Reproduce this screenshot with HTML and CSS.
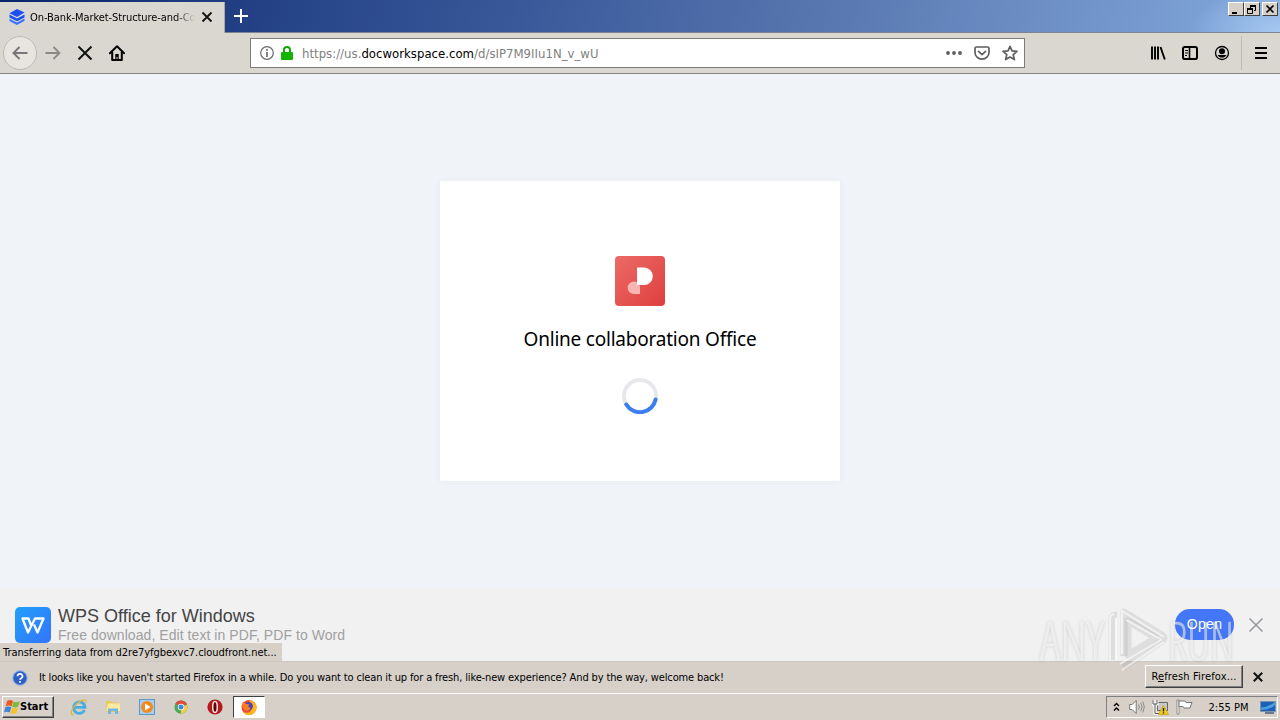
FILE: index.html
```
<!DOCTYPE html>
<html lang="en">
<head>
    <meta charset="UTF-8">
    <meta name="viewport" content="width=device-width, initial-scale=1.0">
    <title>On-Bank-Market-Structure-and-Co</title>
    <link rel="stylesheet" href="styles.css">
</head>
<body>
    <div class="titlebar">
        <div class="tab">
            <svg class="favicon" width="16" height="16" viewBox="0 0 16 16">
                <path fill="#1a50f0" d="M8 0l7.5 3.6L8 8 .5 4.2z"/>
                <path fill="#1a50f0" d="M.5 5.6L8 9.4l7.5-4v3L8 12.2.5 8.4z"/>
                <path fill="#3a72ff" d="M.5 9.8L8 13.4l7.5-3.8v2.2L8 16 .5 12z"/>
            </svg>
            <span class="tab-title">On-Bank-Market-Structure-and-Co</span>
            <svg class="tab-close" width="12" height="12" viewBox="0 0 12 12"><path d="M1.5 1.5l9 9M10.500 1.500l-9 9" stroke="#111" stroke-width="1.800"/></svg>
        </div>
        <svg class="new-tab" width="14" height="14" viewBox="0 0 14 14"><path d="M7 0v14M0 7h14" stroke="#fff" stroke-width="2"/></svg>
        <div class="window-buttons">
            <div class="win-btn"><svg width="12" height="11"><path d="M2 9h5" stroke="#000" stroke-width="2"/></svg></div>
            <div class="win-btn"><svg width="12" height="11"><path d="M4.500 4V1.500h5v5H8M1.500 5.500h5v4h-5z" fill="none" stroke="#000"/><path d="M4 2h6M1 5h6" stroke="#000" stroke-width="2"/></svg></div>
            <div class="win-btn close"><svg width="12" height="11"><path d="M2.500 1.500l7 7M9.500 1.500l-7 7" stroke="#000" stroke-width="1.700"/></svg></div>
        </div>
    </div>

    <div class="toolbar">
        <div class="nav">
            <div class="back"><svg width="16" height="16" viewBox="0 0 16 16"><path d="M15.500 8H1.500M7.500 2l-6 6 6 6" fill="none" stroke="#77757a" stroke-width="1.900"/></svg></div>
            <svg class="forward" width="16" height="16" viewBox="0 0 16 16"><path d="M.5 8h14M8.500 2l6 6-6 6" fill="none" stroke="#8b8986" stroke-width="1.800"/></svg>
            <svg class="stop" width="16" height="16" viewBox="0 0 16 16"><path d="M1.500 1.500l13 13M14.500 1.500l-13 13" stroke="#111" stroke-width="2"/></svg>
            <svg class="home" width="16" height="16" viewBox="0 0 16 16"><path d="M.9 8.300L8 1.300l7.100 7" fill="none" stroke="#000" stroke-width="1.900" stroke-linejoin="round" stroke-linecap="round"/><path d="M3.200 7v8h9.600V7" fill="none" stroke="#000" stroke-width="2" stroke-linejoin="round"/><path d="M6.300 9h3.400v3H6.300zM6.300 12h1.200v3H6.300zM8.500 12h1.200v3H8.500z"/></svg>
        </div>
        <div class="urlbar">
            <svg width="14" height="14" viewBox="0 0 14 14"><circle cx="7" cy="7" r="6.300" fill="none" stroke="#6a6a6a" stroke-width="1.200"/><path d="M7 3v1.800M7 6v5" stroke="#666" stroke-width="1.600"/></svg>
            <svg class="lock" width="12" height="14" viewBox="0 0 12 14"><path d="M3 7V4a3 3 0 0 1 6 0v3" fill="none" stroke="#12a80c" stroke-width="2"/><rect y="6" width="12" height="8" rx="1.200" fill="#12b400"/></svg>
            <span class="url">https://us.<b>docworkspace.com</b>/d/sIP7M9IIu1N_v_wU</span>
            <svg class="dots" width="16" height="16" viewBox="0 0 16 16" fill="#5e5e5e"><circle cx="2" cy="8" r="1.900"/><circle cx="8" cy="8" r="1.900"/><circle cx="14" cy="8" r="1.900"/></svg>
            <svg class="pocket" width="16" height="16" viewBox="0 0 16 16" fill="none" stroke="#5e5e5e" stroke-width="1.700"><path d="M2.500 2h11a1.500 1.500 0 0 1 1.500 1.500V7.500a7 6.700 0 0 1-14 0V3.500A1.500 1.500 0 0 1 2.500 2z"/><path d="M4.500 6.300L8 9.600l3.500-3.300" stroke-linecap="round" stroke-linejoin="round"/></svg>
            <svg width="16" height="16" viewBox="0 0 16 16"><path d="M8 1.300l2 4.600 5 .4-3.800 3.300 1.200 5L8 12l-4.400 2.600 1.200-5L1 6.300l5-.4z" fill="none" stroke="#5e5e5e" stroke-width="1.700" stroke-linejoin="round"/></svg>
        </div>
        <div class="tools">
            <svg width="16" height="16" viewBox="0 0 16 16"><path d="M2 1.500v13M5 1.500v13M8 1.500v13M10.500 2l4.300 12.500" fill="none" stroke="#000" stroke-width="1.900"/></svg>
            <svg width="16" height="16" viewBox="0 0 16 16"><rect x="1" y="2" width="14" height="12" rx="1.800" fill="none" stroke="#000" stroke-width="2"/><path d="M7.500 2v12" stroke="#000" stroke-width="1.600"/><path d="M3 5.500h3M3 8h3M3 10.500h2" stroke="#000"/></svg>
            <svg width="16" height="16" viewBox="0 0 16 16"><circle cx="8" cy="8" r="6.500" fill="none" stroke="#000" stroke-width="1.300"/><circle cx="8" cy="6.300" r="3"/><path d="M3.500 10h9a5.200 5.200 0 0 1-9 0z"/></svg>
            <div class="menu"><svg width="12" height="12" viewBox="0 0 12 12"><path d="M0 1h12M0 6h12M0 11h12" stroke="#000" stroke-width="2"/></svg></div>
        </div>
    </div>

    <div class="page">
        <div class="card">
            <svg width="50" height="50" viewBox="0 0 50 50">
                <defs><linearGradient id="red" x1="0" y1="0" x2="1" y2="1"><stop offset="0" stop-color="#ec6a66"/><stop offset="1" stop-color="#de403e"/></linearGradient></defs>
                <rect width="50" height="50" rx="4" fill="url(#red)"/>
                <path d="M25 38h-6.200a6.200 6.200 0 1 1 6.200-6.200z" fill="#f7b5b3"/>
                <path d="M22 11.500h7a8.800 8.800 0 0 1 0 17.600h-7z" fill="#fff"/>
            </svg>
            <h1>Online collaboration Office</h1>
            <svg class="spinner" width="36" height="36" viewBox="0 0 36 36" fill="none" stroke-width="4">
                <circle cx="18" cy="18" r="16" stroke="#e7e8ec"/>
                <path d="M4.300 26.500A16 16 0 0 0 33.600 21.500" stroke="#3d7eed" stroke-linecap="round"/>
            </svg>
        </div>
        <div class="promo">
            <svg class="wps" width="36" height="36" viewBox="0 0 36 36">
                <defs><linearGradient id="blue" x1="0" y1="0" x2="1" y2="1"><stop offset="0" stop-color="#22a0fa"/><stop offset="1" stop-color="#3274fa"/></linearGradient></defs>
                <rect width="36" height="36" rx="5" fill="url(#blue)"/>
                <path d="M16.500 19.500l-3-8H7.500l5.500 14 7-14h8.500l-6 14-3.500-8" fill="none" stroke="#fff" stroke-width="2.300" stroke-linejoin="round"/>
            </svg>
            <div class="promo-text">
                <p class="promo-title">WPS Office for Windows</p>
                <p class="promo-sub">Free download, Edit text in PDF, PDF to Word</p>
            </div>
            <div class="open"><span>Open</span></div>
            <svg width="14" height="14" viewBox="0 0 14 14"><path d="M.5 .5l13 13M13.500 .5l-13 13" stroke="#96989c" stroke-width="1.500"/></svg>
        </div>
        <div class="status">Transferring data from d2re7yfgbexvc7.cloudfront.net...</div>
    </div>

    <div class="notice">
        <svg width="16" height="16" viewBox="0 0 16 16"><circle cx="8" cy="8" r="7.300" fill="#2d5fc4" stroke="#9db7e4" stroke-width="1.200"/><path d="M5.500 6.200a2.500 2.300 0 1 1 3.700 2c-.9.500-1.200.8-1.200 1.600M8 11v1.800" fill="none" stroke="#fff" stroke-width="1.700"/></svg>
        <span class="notice-text">It looks like you haven't started Firefox in a while. Do you want to clean it up for a fresh, like-new experience? And by the way, welcome back!</span>
        <div class="refresh"><span>R<u>e</u>fresh Firefox...</span></div>
        <svg class="notice-close" width="10" height="10" viewBox="0 0 10 10"><path d="M.8 .8l8.400 8.400M9.200 .8L.8 9.200" stroke="#111" stroke-width="2"/></svg>
    </div>

    <div class="taskbar">
        <div class="start">
            <svg width="16" height="16" viewBox="0 0 16 16">
                <path d="M3 2q3-2 6 0L7.600 7.400q-3-1.600-6 0z" fill="#ea5a24"/>
                <path d="M9.500 2.500q2.500 1.400 6.300-.3L14.200 7.600q-3 1.600-6 .2z" fill="#7dba3c"/>
                <path d="M1.300 8.300q3-1.600 6 0L5.800 13.500q-3-1.600-5.800 0z" fill="#3e86d8"/>
                <path d="M8 8.800q3 1.400 6 0L12.500 14q-3 1.600-6 .2z" fill="#f6c226"/>
            </svg>
            <span>Start</span>
        </div>
        <div class="launch">
            <svg width="18" height="18" viewBox="0 0 18 18" fill="none"><path d="M14.500 12A5.700 5.700 0 1 1 15 9.300H5" stroke="#48aee2" stroke-width="2.800"/><path d="M4 16.500C-1 18 1.500 10 7 5.500s10.500-5 9-.5" stroke="#e2b63c" stroke-width="1.300"/></svg>
            <svg width="18" height="18" viewBox="0 0 18 18"><path d="M2 3h5l1 1.500h7V14H2z" fill="#e9c85e"/><path d="M4 5.500h12V13H2z" fill="#faeaa2"/><path d="M4 16v-5.500h10V16h-3v-3H7v3z" fill="#70b7e2"/></svg>
            <svg width="18" height="18" viewBox="0 0 18 18"><rect x="1.500" y="1.500" width="15" height="15" fill="#a9cff0" stroke="#5899d2"/><circle cx="9" cy="9" r="6" fill="#f28a1c"/><path d="M7 5.500l5.500 3.500L7 12.500z" fill="#fff"/></svg>
            <svg width="18" height="18" viewBox="0 0 18 18"><circle cx="9" cy="9" r="6.600" fill="#4ba956"/><path d="M9 9L3.300 5.700A6.600 6.600 0 0 1 15.200 6.800H9z" fill="#df4b3c"/><path d="M9 9l6.200-2.200A6.600 6.600 0 0 1 9 15.600z" fill="#f7cf44"/><circle cx="9" cy="9" r="3.200" fill="#fff"/><circle cx="9" cy="9" r="2.500" fill="#4285e8"/></svg>
            <svg width="18" height="18" viewBox="0 0 18 18"><circle cx="9" cy="9" r="7.600" fill="#b5191c"/><ellipse cx="9" cy="9" rx="2.300" ry="5.500" fill="#600" stroke="#f7e5e5" stroke-width="1.500"/></svg>
        </div>
        <div class="task">
            <svg width="18" height="18" viewBox="0 0 18 18"><circle cx="9" cy="9.500" r="7.500" fill="#f34935"/><path d="M9 1c1.500 2 6 2.500 7.300 6.500C17.500 13 14 17 9 17c-3 0-5-1.500-6-3 6 2 9-1 8-4z" fill="#ffb71c"/><circle cx="8.700" cy="8.200" r="4.200" fill="#4b45bb"/><path d="M1.500 8L3 3.500l2.500 2.300 4 .7-1.500 2 2.500 1.500c-1 3-4 3.500-6 1.500z" fill="#fa7d22"/></svg>
        </div>
        <div class="tray">
            <svg class="chevrons" width="7" height="10" viewBox="0 0 7 10"><path d="M1 4l2.500-2.500L6 4M1 8.500L3.500 6 6 8.500" fill="none" stroke="#000" stroke-width="1.400"/></svg>
            <svg class="sound" width="16" height="16" viewBox="0 0 16 16"><path d="M.7 5.500h2.500l4-4v13l-4-4H.7z" fill="#fff" stroke="#777"/><path d="M9.500 5.500q1.700 2.500 0 5M11.700 3.800q2.800 4.200 0 8.400M13.800 2.500q3 5.500 0 11" fill="none" stroke="#8c8c8c"/></svg>
            <svg class="network" width="17" height="16" viewBox="0 0 17 16"><path d="M5.500 3.500h10v8h-10z" fill="#c8c8c8" stroke="#666"/><path d="M1 1v4h4V1M3 5v10h5" fill="none" stroke="#fff" stroke-width="3"/><path d="M1 1v4h4V1M3 5v9.500h5" fill="none" stroke="#555"/><path d="M11.500 6.500l5 9h-10z" fill="#f7cf1d" stroke="#cc9c00" stroke-width=".7"/><path d="M11.500 9v3.500M11.500 13.300v1.200" stroke="#222" stroke-width="1.400"/></svg>
            <svg class="flag" width="17" height="16" viewBox="0 0 17 16"><path d="M1 1h2v14H1z" fill="#fff" stroke="#777" stroke-width=".8"/><path d="M3 2h6l1 1.500h6l-2 5.500H8L7 7.500H3z" fill="#fff" stroke="#777"/></svg>
            <span class="clock">2:55 PM</span>
            <svg width="16" height="16" viewBox="0 0 16 16"><path d="M.5 2.500h15v10H.5z" fill="#1b62b6" stroke="#7b92b0"/><path d="M1 8.500q7 0 14-5.500v3q-5 5-14 5z" fill="#4da0df"/><path d="M5 14h9" stroke="#465d7c" stroke-width="1.500"/></svg>
        </div>
    </div>

    <svg class="watermark" width="204" height="80" viewBox="-2 0 204 80">
        <g class="mark">
            <text x="1" y="52" textLength="64" lengthAdjust="spacingAndGlyphs">ANY</text>
            <text x="129" y="52" textLength="66" lengthAdjust="spacingAndGlyphs">RUN</text>
        </g>
        <g class="shadow">
            <path d="M73 52V11q0-4 5-4M85 48V4l38 23q4 3 0 6L84 59"/>
            <path d="M89 13l28 17-28 17z"/>
        </g>
        <g class="play">
            <path d="M71 52V11q0-4 4-5M77 52V10M83 46V3l42 26M87 12l36 20M81 56l42-25M83 62l42-28"/>
        </g>
    </svg>
</body>
</html>
```
FILE: styles.css
```
* {
    box-sizing: border-box;
}
body {
    margin: 0;
    width: 1280px;
    height: 720px;
    overflow: hidden;
    display: flex;
    flex-direction: column;
    position: relative;
    background: #d6d0c9;
    color: #000;
    font-family: "DejaVu Sans Condensed", "DejaVu Sans", sans-serif;
    font-stretch: condensed;
    font-size: 11px;
    white-space: nowrap;
}
svg {
    display: block;
    flex-shrink: 0;
}
p, h1 {
    margin: 0;
}

/* Title bar */
.titlebar {
    height: 33px;
    flex-shrink: 0;
    display: flex;
    background: radial-gradient(ellipse 90px 45px at 100% 100%, #a5c8f0, rgba(165, 200, 240, 0)), linear-gradient(100deg, #0a246a 0, #213e83 18%, #385899 40%, #5573ad 62%, #6b8dc4 80%, #83a9dc 100%);
    border-bottom: 1px solid #7d8390;
}
.tab {
    width: 225px;
    height: 31px;
    margin-top: 2px;
    padding: 0 11px 2px 9px;
    display: flex;
    align-items: center;
    background: #dad7d1;
    border-right: 1px solid #aaa8a5;
}
.tab-title {
    width: 165px;
    margin: 1px 0 0 5px;
    overflow: hidden;
    letter-spacing: -0.08px;
    -webkit-mask-image: linear-gradient(90deg, #000 88%, transparent);
}
.tab-close {
    margin-left: 6px;
}
.new-tab {
    margin: 9px 0 0 9px;
}
.window-buttons {
    display: flex;
    margin: 2px 2px 0 auto;
}
.win-btn {
    width: 16px;
    height: 14px;
    padding: 1px;
    background: #d6d0c9;
    border: 1px solid #404040;
    border-top-color: #fff;
    border-left-color: #fff;
}
.win-btn.close {
    margin-left: 2px;
}

/* Toolbar */
.toolbar {
    height: 41px;
    flex-shrink: 0;
    display: flex;
    align-items: center;
    background: #dad7d1;
    border-bottom: 1px solid #858585;
}
.nav {
    width: 250px;
    padding-left: 3px;
    display: flex;
    align-items: center;
}
.back {
    width: 34px;
    height: 34px;
    display: flex;
    align-items: center;
    justify-content: center;
    border: 1px solid #bcb9b5;
    border-radius: 50%;
    background: #e8e5e0;
}
.forward {
    margin-left: 8px;
}
.stop, .home {
    margin-left: 16px;
}
.urlbar {
    width: 775px;
    height: 30px;
    padding: 0 6px 0 9px;
    display: flex;
    align-items: center;
    background: #fff;
    border: 1px solid #7c7c7c;
}
.lock {
    margin-left: 7px;
}
.url {
    margin: 0 auto 0 9px;
    font-size: 13px;
    letter-spacing: 0.02px;
    color: #808080;
}
.url b {
    font-weight: normal;
    color: #000;
}
.dots, .pocket {
    margin-right: 12px;
}
.tools {
    margin-left: auto;
    display: flex;
    align-items: center;
    gap: 16px;
}
.menu {
    height: 34px;
    margin-left: -5px;
    padding: 0 13px;
    display: flex;
    align-items: center;
    border-left: 1px solid #bebbb6;
}

/* Page */
.page {
    flex: 1;
    position: relative;
    display: flex;
    flex-direction: column;
    align-items: center;
    background: #f0f3f7;
}
.card {
    width: 400px;
    height: 300px;
    margin-top: 107px;
    padding-top: 75px;
    display: flex;
    flex-direction: column;
    align-items: center;
    background: #fff;
    box-shadow: 0 0 6px rgba(60, 80, 120, 0.06);
}
.card h1 {
    margin-top: 19px;
    font: 19px/28px "Noto Sans", "Open Sans", sans-serif;
    letter-spacing: -0.22px;
}
.spinner {
    margin-top: 25px;
}
.promo {
    width: 100%;
    height: 73px;
    margin-top: auto;
    padding: 0 17px 0 15px;
    display: flex;
    align-items: center;
    background: #f1f1f2;
    font-family: "Liberation Sans", Arial, sans-serif;
}
.promo-text {
    margin-left: 7px;
}
.promo-title {
    font-size: 18px;
    line-height: 20px;
    color: #444;
}
.promo-sub {
    font-size: 14px;
    line-height: 18px;
    letter-spacing: 0.06px;
    color: #a0a0a0;
}
.open {
    width: 59px;
    height: 31px;
    margin: 0 15px 1px auto;
    border-radius: 15px;
    background: #4477f8;
    color: #fff;
    font-size: 14px;
    letter-spacing: 0.3px;
    line-height: 31px;
    text-align: center;
}
.open span {
    position: relative;
    z-index: 2;
}
.status {
    position: absolute;
    left: 0;
    bottom: 0;
    width: 282px;
    height: 18px;
    padding: 1px 0 0 3px;
    line-height: 18px;
    letter-spacing: -0.04px;
    background: #d6d0c9;
}

/* Notification bar */
.notice {
    height: 32px;
    flex-shrink: 0;
    padding: 0 17px 0 12px;
    display: flex;
    align-items: center;
    border-top: 1px solid #cbc8c2;
}
.notice-text {
    margin-left: 11px;
    letter-spacing: -0.14px;
}
.refresh {
    width: 98px;
    height: 23px;
    margin: -3px 10px 0 auto;
    line-height: 21px;
    text-align: center;
    letter-spacing: 0.15px;
    border: 1px solid #404040;
    border-top-color: #fff;
    border-left-color: #fff;
    box-shadow: inset -1px -1px #808080;
}
.notice-close {
    margin-top: -1px;
}

/* Taskbar */
.taskbar {
    height: 27px;
    flex-shrink: 0;
    padding: 2px 2px 3px;
    display: flex;
    align-items: center;
    border-top: 1px solid #fff;
}
.start {
    width: 52px;
    height: 22px;
    padding-left: 1px;
    display: flex;
    align-items: center;
    border: 1px solid #404040;
    border-top-color: #fff;
    border-left-color: #fff;
    box-shadow: inset -1px -1px #808080;
    font-weight: bold;
}
.launch {
    margin-left: 16px;
    display: flex;
    gap: 16px;
}
.task {
    width: 32px;
    height: 22px;
    margin-left: 9px;
    display: flex;
    align-items: center;
    justify-content: center;
    background: #fff;
    border: 1px solid #fff;
    border-top-color: #404040;
    border-left-color: #404040;
}
.tray {
    width: 172px;
    height: 22px;
    margin-left: auto;
    padding: 0 1px 0 6px;
    display: flex;
    align-items: center;
    border: 1px solid #fff;
    border-top-color: #808080;
    border-left-color: #808080;
}
.sound {
    margin-left: 9px;
}
.network, .flag {
    margin-left: 7px;
}
.clock {
    margin: 0 auto;
    padding: 1px 0 0 4px;
}

/* Watermark over the page corner */
.watermark {
    position: absolute;
    z-index: 1;
    left: 1037px;
    top: 608px;
    overflow: visible;
}
.mark text {
    font-family: "Open Sans", "Liberation Sans", sans-serif;
    font-size: 53px;
    font-weight: 300;
    fill: rgba(255, 255, 255, 0.5);
    stroke: rgba(255, 255, 255, 0.2);
    stroke-width: 1;
    filter: drop-shadow(0 0 1.5px rgba(110, 110, 110, 0.5));
}
.play {
    fill: none;
    stroke: rgba(255, 255, 255, 0.6);
    stroke-width: 2;
    stroke-linejoin: round;
}
.shadow {
    fill: none;
    stroke: rgba(140, 140, 140, 0.18);
    stroke-width: 7;
    stroke-linejoin: round;
}
```
